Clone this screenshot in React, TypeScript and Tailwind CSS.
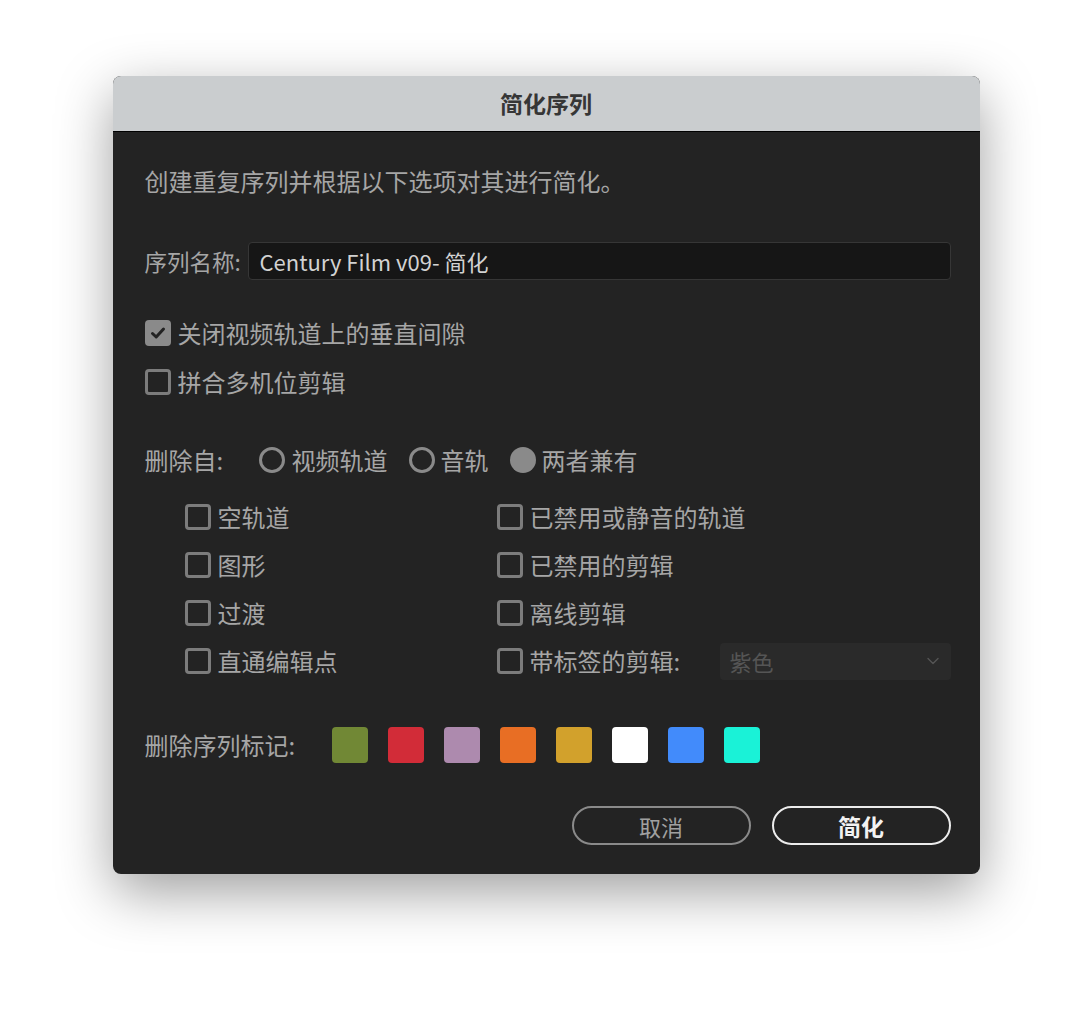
import { ChevronDown } from "lucide-react";

const font = { fontFamily: '"Noto Sans CJK SC", "Noto Sans", sans-serif' };

const leftItems = ["空轨道", "图形", "过渡", "直通编辑点"];
const rightItems = ["已禁用或静音的轨道", "已禁用的剪辑", "离线剪辑"];
const swatches = [
  "bg-[#718835]",
  "bg-[#d22c38]",
  "bg-[#ad8aae]",
  "bg-[#e86e24]",
  "bg-[#d2a12c]",
  "bg-[#ffffff]",
  "bg-[#428bfb]",
  "bg-[#1af2d7]",
];

function Box({ checked = false }: { checked?: boolean }) {
  if (checked) {
    return (
      <span className="flex h-[26px] w-[26px] shrink-0 items-center justify-center rounded-[4px] bg-[#8a8a8a]">
        <svg width="18" height="18" viewBox="0 0 18 18" fill="none">
          <path
            d="M3.5 9.5 L7.2 13 L14.5 5"
            stroke="#222"
            strokeWidth="3"
            strokeLinecap="round"
            strokeLinejoin="round"
          />
        </svg>
      </span>
    );
  }
  return (
    <span className="h-[26px] w-[26px] shrink-0 rounded-[4px] border-[3px] border-[#7c7c7c]" />
  );
}

function Radio({ on = false }: { on?: boolean }) {
  return on ? (
    <span className="h-[26px] w-[26px] shrink-0 rounded-full bg-[#8a8a8a]" />
  ) : (
    <span className="h-[26px] w-[26px] shrink-0 rounded-full border-[3px] border-[#8a8a8a]" />
  );
}

function Check({ label, checked }: { label: string; checked?: boolean }) {
  return (
    <div className="flex h-[32px] items-center gap-[7px]">
      <Box checked={checked} />
      <span>{label}</span>
    </div>
  );
}

export default function App() {
  return (
    <div className="flex min-h-[1024px] justify-center bg-white pt-[76px]" style={font}>
      <div className="h-[798px] w-[867px] overflow-hidden rounded-[8px] bg-[#232323] shadow-[0_18px_55px_rgba(0,0,0,0.38)]">
        <div className="flex h-[56px] items-center justify-center border-b border-black bg-[#cacdcf] text-[23px] font-bold text-[#363636]">
          简化序列
        </div>
        <div className="flex flex-col pl-[32px] pr-[29px] pt-[33px] text-[24px] leading-[32px] text-[#a6a6a6]">
          <div>创建重复序列并根据以下选项对其进行简化。</div>

          <div className="mt-[45px] flex items-center">
            <span className="w-[103px] shrink-0 text-[22.5px]">序列名称:</span>
            <div className="flex h-[38px] flex-1 items-center rounded-[4px] border border-[#363636] bg-[#161616] px-[11px] text-[22px] text-[#d2d2d2]">
              Century Film v09- 简化
            </div>
          </div>

          <div className="mt-[37px]">
            <Check label="关闭视频轨道上的垂直间隙" checked />
          </div>
          <div className="mt-[17px]">
            <Check label="拼合多机位剪辑" />
          </div>

          <div className="mt-[46px] flex h-[32px] items-center">
            <span className="w-[114px]">删除自:</span>
            <div className="flex items-center gap-[7px]">
              <Radio />
              <span>视频轨道</span>
            </div>
            <div className="ml-[21px] flex items-center gap-[6px]">
              <Radio />
              <span>音轨</span>
            </div>
            <div className="ml-[21px] flex items-center gap-[6px]">
              <Radio on />
              <span>两者兼有</span>
            </div>
          </div>

          <div className="mt-[25px] grid grid-cols-[312px_1fr] pl-[40px]">
            <div className="flex flex-col gap-[16px]">
              {leftItems.map((t) => (
                <Check key={t} label={t} />
              ))}
            </div>
            <div className="flex flex-col gap-[16px]">
              {rightItems.map((t) => (
                <Check key={t} label={t} />
              ))}
              <div className="flex h-[32px] items-center">
                <Check label="带标签的剪辑:" />
                <div className="ml-auto flex h-[37px] w-[231px] items-center justify-between rounded-[4px] bg-[#2a2a2a] pl-[10px] pr-[8px] text-[#555]">
                  <span className="text-[22px]">紫色</span>
                  <ChevronDown size={20} strokeWidth={1.6} className="text-[#555]" />
                </div>
              </div>
            </div>
          </div>

          <div className="mt-[50px] flex h-[36px] items-center">
            <span className="w-[187px]">删除序列标记:</span>
            <div className="flex gap-[20px]">
              {swatches.map((c) => (
                <span key={c} className={`h-[36px] w-[36px] rounded-[4px] ${c}`} />
              ))}
            </div>
          </div>

          <div className="mt-[43px] flex justify-end gap-[21px]">
            <button className="flex h-[39px] w-[179px] items-center justify-center rounded-full border-[2px] border-[#8a8a8a] text-[22px] text-[#a0a0a0]">
              取消
            </button>
            <button className="flex h-[39px] w-[179px] items-center justify-center rounded-full border-[2px] border-[#ececec] text-[23px] font-bold text-[#f2f2f2]">
              简化
            </button>
          </div>
        </div>
      </div>
    </div>
  );
}
